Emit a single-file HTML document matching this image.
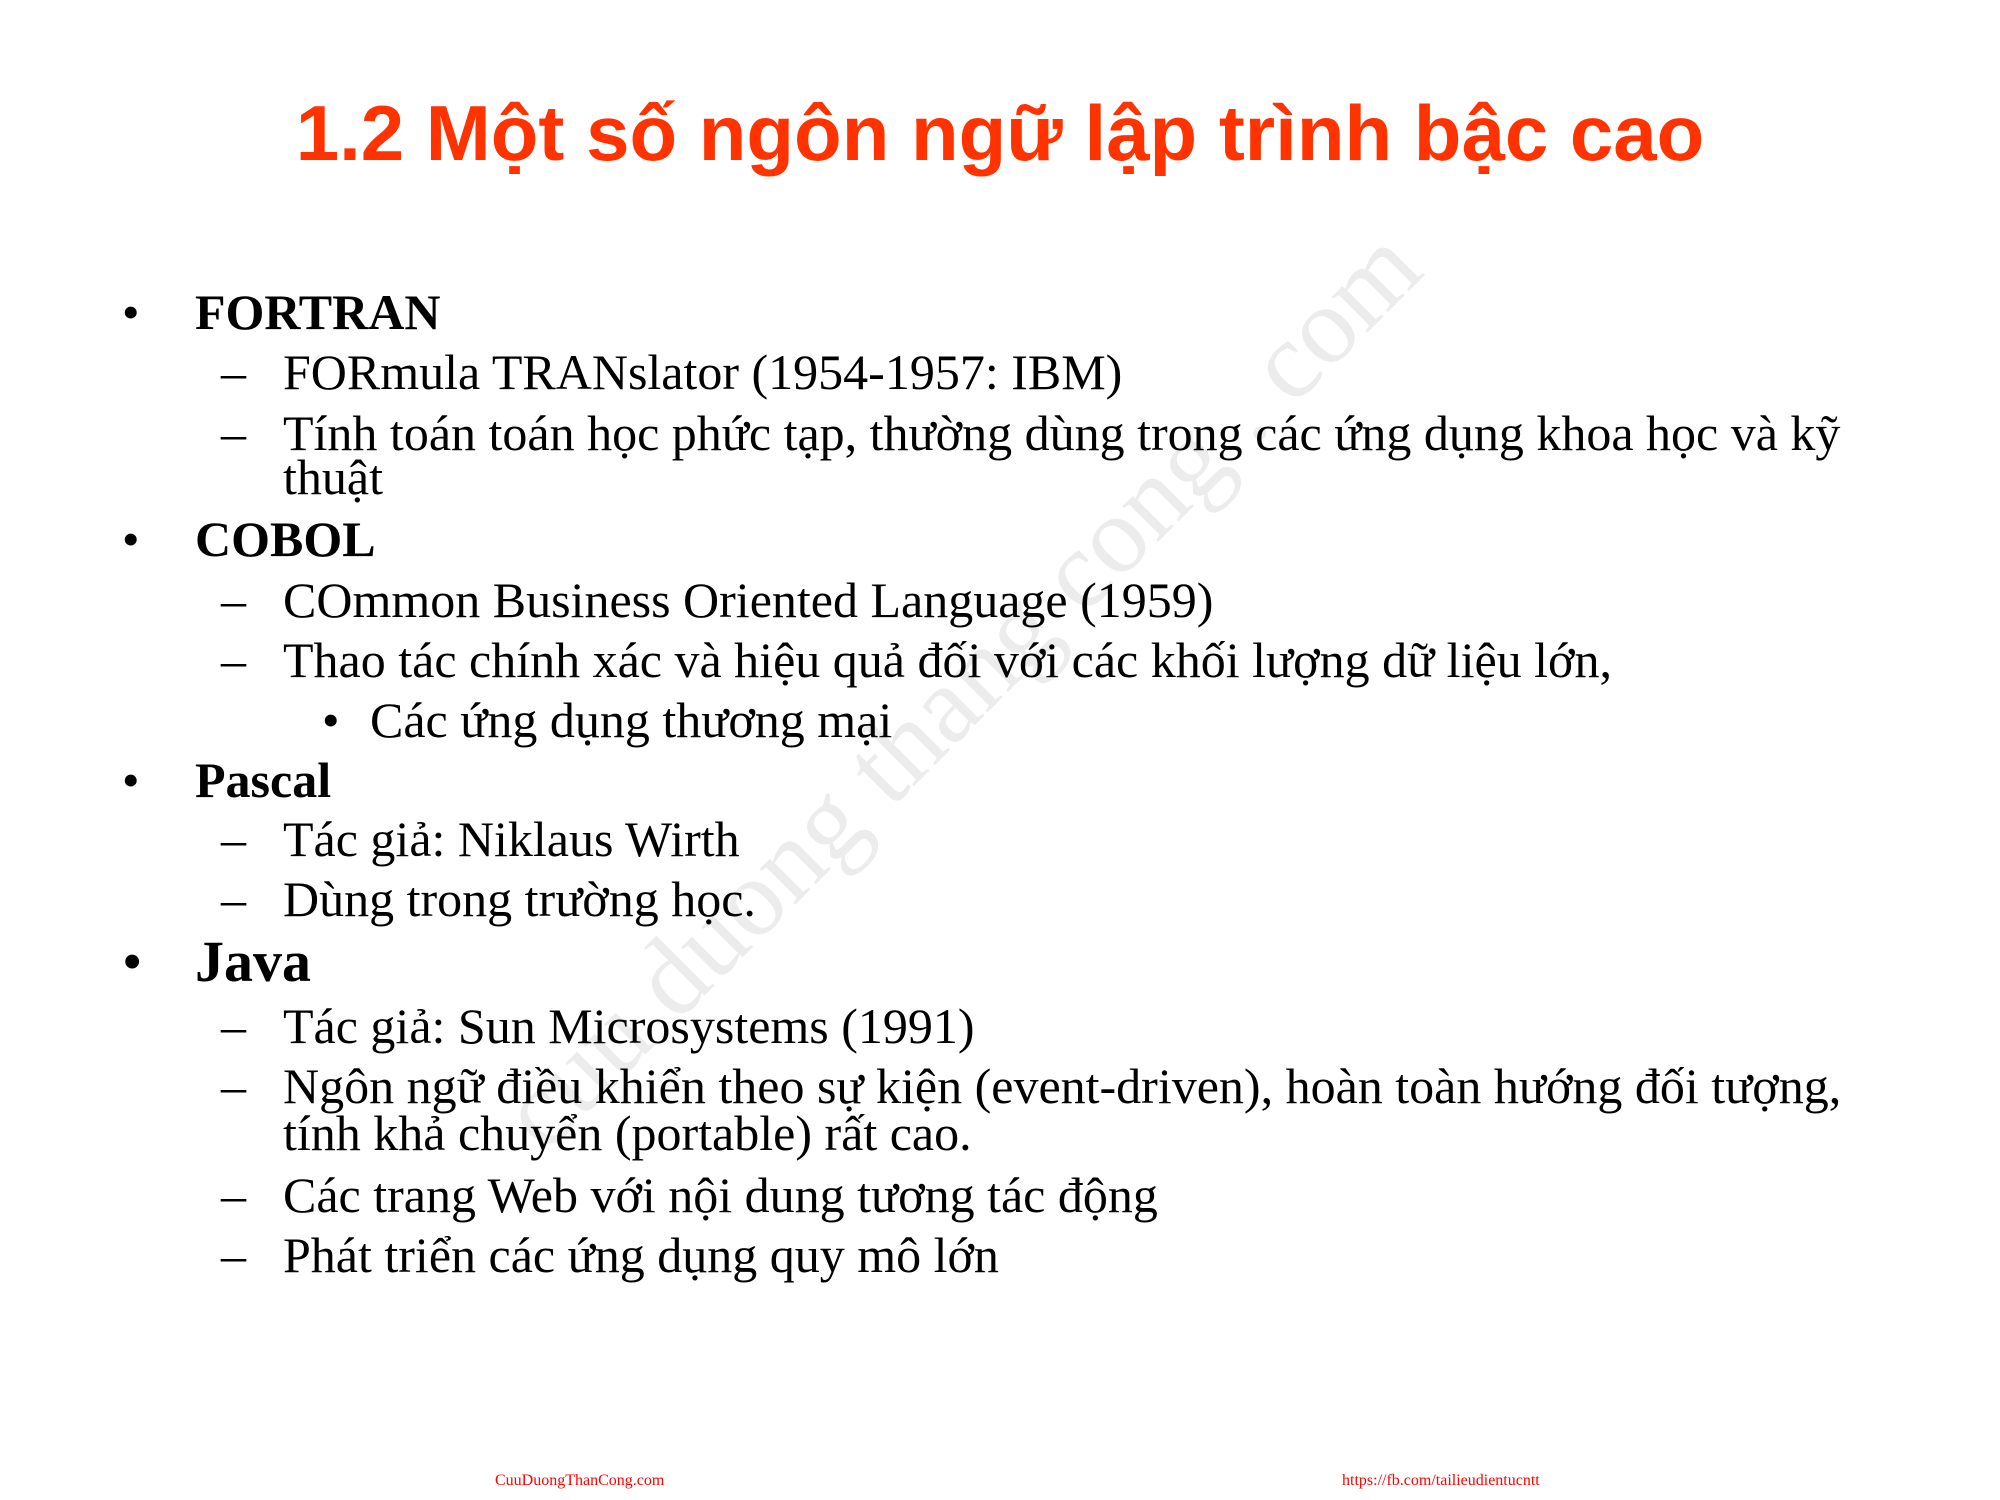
<!DOCTYPE html>
<html><head><meta charset="utf-8"><style>
html,body{margin:0;padding:0;background:#fff;}
body{width:2000px;height:1500px;position:relative;overflow:hidden;font-family:"Liberation Serif",serif;color:#000;}
.l{position:absolute;white-space:nowrap;font-size:50px;line-height:52px;}
.b{font-weight:bold;}
.t{position:absolute;left:0;width:2000px;text-align:center;font-family:"Liberation Sans",sans-serif;font-weight:bold;font-size:78px;line-height:80px;color:#ff3300;top:93px;}
.wm{position:absolute;left:540px;top:1070px;height:100px;line-height:100px;font-size:110px;color:#ececec;transform:rotate(-45deg);transform-origin:0 80px;white-space:nowrap;font-family:"Liberation Serif",serif;}
.f{position:absolute;font-size:16px;color:#ff0000;white-space:nowrap;}
</style></head><body>
<div class="wm">cuu duong thang cong . com</div>
<div class="t">1.2 Một số ngôn ngữ lập trình bậc cao</div>

<div class="l" style="left:122px;top:286px">•</div><div class="l b" style="left:195px;top:286px">FORTRAN</div>
<div class="l" style="left:221px;top:346px">–</div><div class="l" style="left:283px;top:346px">FORmula TRANslator (1954-1957: IBM)</div>
<div class="l" style="left:221px;top:407px">–</div><div class="l" style="left:283px;top:407px">Tính toán toán học phức tạp, thường dùng trong các ứng dụng khoa học và kỹ</div>
<div class="l" style="left:283px;top:451px">thuật</div>
<div class="l" style="left:122px;top:513px">•</div><div class="l b" style="left:195px;top:513px">COBOL</div>
<div class="l" style="left:221px;top:574px">–</div><div class="l" style="left:283px;top:574px">COmmon Business Oriented Language (1959)</div>
<div class="l" style="left:221px;top:634px">–</div><div class="l" style="left:283px;top:634px">Thao tác chính xác và hiệu quả đối với các khối lượng dữ liệu lớn,</div>
<div class="l" style="left:322px;top:694px">•</div><div class="l" style="left:370px;top:694px">Các ứng dụng thương mại</div>
<div class="l" style="left:122px;top:754px">•</div><div class="l b" style="left:195px;top:754px">Pascal</div>
<div class="l" style="left:221px;top:813px">–</div><div class="l" style="left:283px;top:813px">Tác giả: Niklaus Wirth</div>
<div class="l" style="left:221px;top:873px">–</div><div class="l" style="left:283px;top:873px">Dùng trong trường học.</div>
<div class="l" style="left:122px;top:932px;font-size:58px;line-height:60px">•</div><div class="l b" style="left:195px;top:932px;font-size:58px;line-height:60px">Java</div>
<div class="l" style="left:221px;top:1000px">–</div><div class="l" style="left:283px;top:1000px">Tác giả: Sun Microsystems (1991)</div>
<div class="l" style="left:221px;top:1060px">–</div><div class="l" style="left:283px;top:1060px">Ngôn ngữ điều khiển theo sự kiện (event-driven), hoàn toàn hướng đối tượng,</div>
<div class="l" style="left:283px;top:1107px">tính khả chuyển (portable) rất cao.</div>
<div class="l" style="left:221px;top:1169px">–</div><div class="l" style="left:283px;top:1169px">Các trang Web với nội dung tương tác động</div>
<div class="l" style="left:221px;top:1229px">–</div><div class="l" style="left:283px;top:1229px">Phát triển các ứng dụng quy mô lớn</div>

<div class="f" style="left:495px;top:1472px">CuuDuongThanCong.com</div>
<div class="f" style="left:1342px;top:1472px">https://fb.com/tailieudientucntt</div>
</body></html>
